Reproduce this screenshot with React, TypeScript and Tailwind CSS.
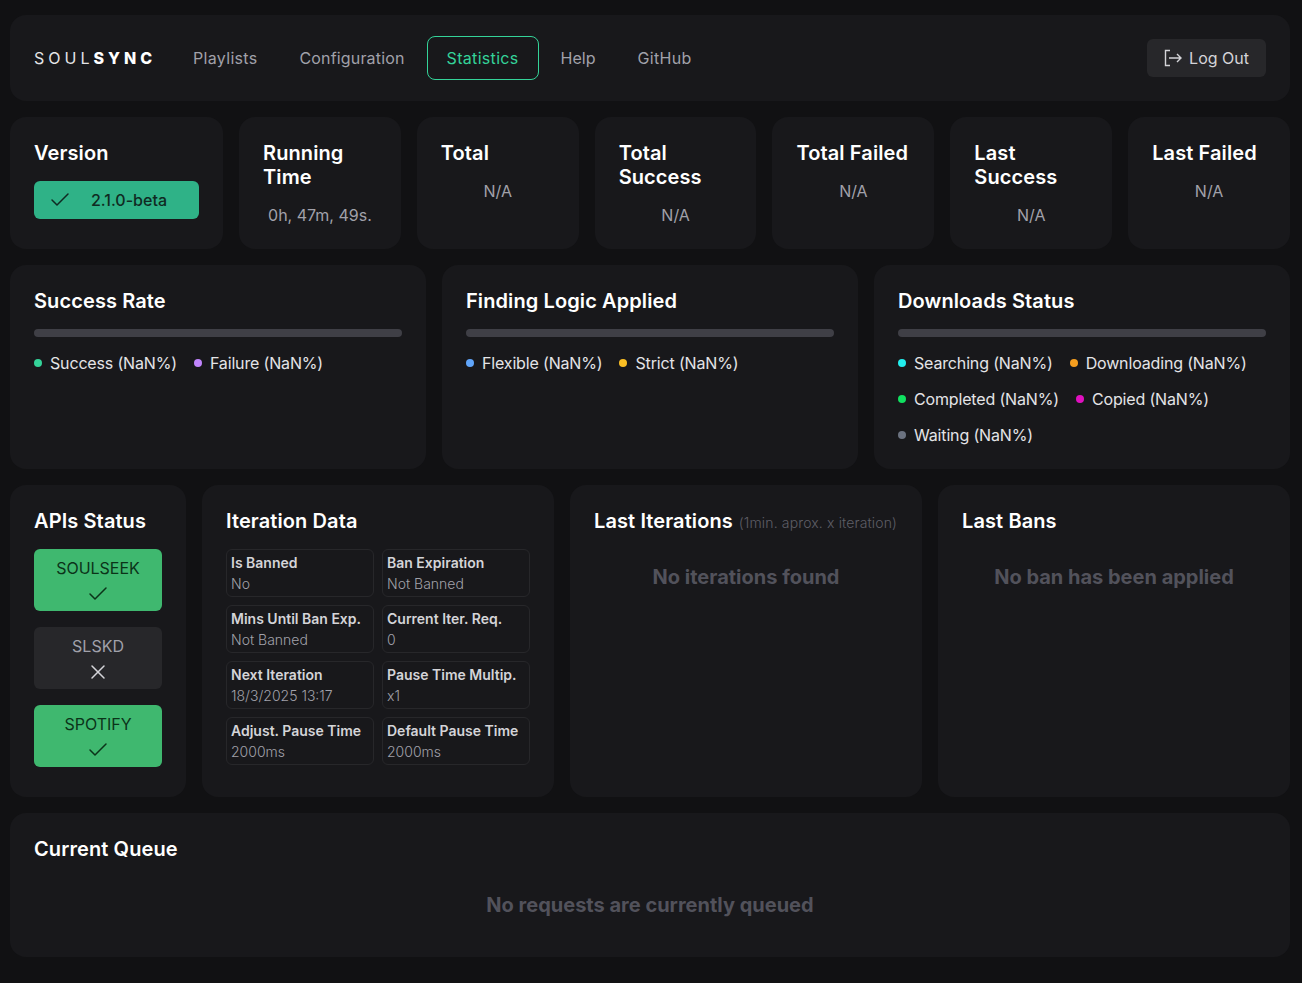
import { Check, X } from "lucide-react";
import type { ReactNode } from "react";

const Card = ({ className = "", children }: { className?: string; children: ReactNode }) => (
  <div className={`rounded-2xl bg-[#18181b] ${className}`}>{children}</div>
);

const Title = ({ children }: { children: ReactNode }) => (
  <h2 className="text-[20px] leading-6 font-semibold tracking-[0.005em] text-white">{children}</h2>
);

const Empty = ({ children }: { children: ReactNode }) => (
  <p className="mt-[30px] text-center text-xl font-bold text-[#52525b]">{children}</p>
);

const stats = [
  { title: "Running Time", value: "0h, 47m, 49s." },
  { title: "Total", value: "N/A" },
  { title: "Total Success", value: "N/A" },
  { title: "Total Failed", value: "N/A" },
  { title: "Last Success", value: "N/A" },
  { title: "Last Failed", value: "N/A" },
];

const charts = [
  {
    title: "Success Rate",
    legend: [
      { label: "Success (NaN%)", color: "bg-[#34d399]" },
      { label: "Failure (NaN%)", color: "bg-[#c084fc]" },
    ],
  },
  {
    title: "Finding Logic Applied",
    legend: [
      { label: "Flexible (NaN%)", color: "bg-[#60a5fa]" },
      { label: "Strict (NaN%)", color: "bg-[#fbbf24]" },
    ],
  },
  {
    title: "Downloads Status",
    legend: [
      { label: "Searching (NaN%)", color: "bg-[#22eeee]" },
      { label: "Downloading (NaN%)", color: "bg-[#f59e1f]" },
      { label: "Completed (NaN%)", color: "bg-[#10e060]" },
      { label: "Copied (NaN%)", color: "bg-[#e010c0]" },
      { label: "Waiting (NaN%)", color: "bg-[#6b7280]" },
    ],
  },
];

const apis = [
  { name: "SOULSEEK", ok: true },
  { name: "SLSKD", ok: false },
  { name: "SPOTIFY", ok: true },
];

const iteration = [
  ["Is Banned", "No"],
  ["Ban Expiration", "Not Banned"],
  ["Mins Until Ban Exp.", "Not Banned"],
  ["Current Iter. Req.", "0"],
  ["Next Iteration", "18/3/2025 13:17"],
  ["Pause Time Multip.", "x1"],
  ["Adjust. Pause Time", "2000ms"],
  ["Default Pause Time", "2000ms"],
];

export default function App() {
  return (
    <div className="min-h-[983px] bg-[#111113] pl-[10px] pr-[12px] pt-[15px] pb-[26px] font-['Inter',sans-serif] flex flex-col gap-4">
      <Card className="h-[86px] flex items-center justify-between px-6">
        <div className="flex items-center">
          <span className="text-base leading-6 tracking-[0.25em] text-[#e4e4e7] w-[139px] whitespace-nowrap">
            SOUL<b className="font-extrabold text-white">SYNC</b>
          </span>
          <nav className="flex items-center text-base text-[#a1a1aa] gap-[2px]">
            <a className="px-5 py-[10px] tracking-[0.02em]">Playlists</a>
            <a className="px-5 py-[10px] tracking-[0.01em]">Configuration</a>
            <a className="h-11 px-[19px] flex items-center rounded-lg border border-[#34d399] text-[#34d399] tracking-[0.02em]">Statistics</a>
            <a className="px-5 py-[10px]">Help</a>
            <a className="px-5 py-[10px] tracking-[0.02em]">GitHub</a>
          </nav>
        </div>
        <button className="h-[38px] px-[17px] rounded-md bg-[#27272a] text-[#d4d4d8] flex items-center gap-[7px] text-base">
          <svg width="18" height="18" viewBox="0 0 18 18" fill="none" stroke="currentColor" strokeWidth="1.4">
            <path d="M6 1.5H1.5v15H6" />
            <path d="M5 9h12M13 5l4 4-4 4" />
          </svg>
          Log Out
        </button>
      </Card>

      <div className="grid grid-cols-[213px_repeat(6,1fr)] gap-4">
        <Card className="p-6 h-[132px]">
          <Title>Version</Title>
          <div className="mt-4 h-[38px] rounded-md bg-[#2fb287] flex items-center pl-[14px] text-[#0f2a22] text-base">
            <Check size={24} strokeWidth={1.5} />
            <span className="ml-[19px] font-medium">2.1.0-beta</span>
          </div>
        </Card>
        {stats.map((s) => (
          <Card key={s.title} className="p-6 h-[132px]">
            <Title>{s.title}</Title>
            <div className="mt-[14px] text-center text-base leading-6 text-[#a1a1aa]">{s.value}</div>
          </Card>
        ))}
      </div>

      <div className="grid grid-cols-3 gap-4">
        {charts.map((c) => (
          <Card key={c.title} className="p-6 h-[204px]">
            <Title>{c.title}</Title>
            <div className="mt-4 h-2 rounded-full bg-[#3f3f46]" />
            <div className="mt-[14px] flex flex-wrap gap-x-[17px] gap-y-3">
              {c.legend.map((l) => (
                <div key={l.label} className="flex items-center gap-2 text-base leading-6 tracking-[-0.01em] text-[#e4e4e7]">
                  <span className={`size-2 rounded-full ${l.color}`} />
                  {l.label}
                </div>
              ))}
            </div>
          </Card>
        ))}
      </div>

      <div className="grid grid-cols-[1fr_2fr_2fr_2fr] gap-4">
        <Card className="p-6 h-[312px]">
          <Title>APIs Status</Title>
          <div className="mt-4 flex flex-col gap-4">
            {apis.map((a) => (
              <div
                key={a.name}
                className={`h-[62px] rounded-md flex flex-col items-center pt-[7px] text-base leading-6 ${
                  a.ok ? "bg-[#3fb86f] text-[#0b3319]" : "bg-[#27272a] text-[#a1a1aa]"
                }`}
              >
                {a.name}
                {a.ok ? (
                  <Check size={24} strokeWidth={1.5} className="mt-[2px]" />
                ) : (
                  <X size={24} strokeWidth={1.5} className="mt-[2px] text-[#d4d4d8]" />
                )}
              </div>
            ))}
          </div>
        </Card>
        <Card className="p-6 h-[312px]">
          <Title>Iteration Data</Title>
          <div className="mt-4 grid grid-cols-2 gap-2">
            {iteration.map(([k, v]) => (
              <div key={k} className="h-12 rounded-md border border-[#27272a] px-1 pt-[3px] text-sm leading-5">
                <div className="font-semibold text-[#d4d4d8] whitespace-nowrap">{k}</div>
                <div className="text-[#a1a1aa] font-light mt-px">{v}</div>
              </div>
            ))}
          </div>
        </Card>
        <Card className="p-6 h-[312px]">
          <div className="flex items-baseline gap-[6px] whitespace-nowrap">
            <Title>Last Iterations</Title>
            <span className="text-sm font-light tracking-[0.01em] text-[#5e5e66]">(1min. aprox. x iteration)</span>
          </div>
          <Empty>No iterations found</Empty>
        </Card>
        <Card className="p-6 h-[312px]">
          <Title>Last Bans</Title>
          <Empty>No ban has been applied</Empty>
        </Card>
      </div>

      <Card className="p-6 h-[144px]">
        <Title>Current Queue</Title>
        <Empty>No requests are currently queued</Empty>
      </Card>
    </div>
  );
}
